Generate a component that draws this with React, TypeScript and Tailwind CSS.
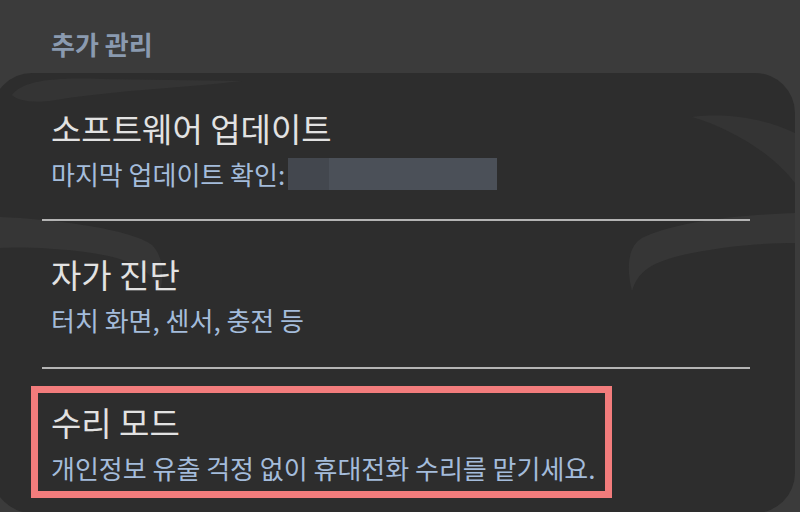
const font = { fontFamily: '"Noto Sans CJK KR", "Noto Sans", sans-serif' };

type Item = { title: string; sub: React.ReactNode };

function Swooshes() {
    return (
        <svg className="absolute inset-0 pointer-events-none" width="803" height="440" viewBox="0 0 803 440">
            <path d="M20 22 C30 8 60 4 110 6 L250 8 C200 14 120 18 70 26 C50 30 28 30 20 22 Z" fill="#343434" />
            <path d="M8 144 C60 146 140 156 160 172 C172 184 172 204 168 218 C160 198 140 186 100 180 C60 174 20 174 8 175 Z" fill="#363636" />
            <path d="M803 140 C740 142 680 150 650 165 C636 173 634 195 640 218 C646 198 660 188 700 180 C740 172 780 170 803 170 Z" fill="#363636" />
            <path d="M700 44 C730 40 770 44 803 60 L803 110 C780 80 740 56 700 44 Z" fill="#343434" />
        </svg>
    );
}

function Row({ title, sub }: Item) {
    return (
        <div className="pl-[9px]">
            <div className="text-[33px] leading-[40px] text-[#e2e2e2]">{title}</div>
            <div className="mt-[10px] text-[26px] leading-[32px] text-[#a4bcdb]">{sub}</div>
        </div>
    );
}

export default function App() {
    return (
        <div className="w-[800px] h-[512px] bg-[#3b3b3b] overflow-hidden" style={font}>
            <div className="h-[73px] pl-[51px] pt-[28px] text-[26px] leading-[32px] font-bold text-[#8a9ab0]">추가 관리</div>
            <div className="relative -ml-[8px] w-[803px] h-[440px] rounded-[40px] bg-[#2d2d2d] pl-[50px]">
                <Swooshes />
                <div className="relative w-[708px]">
                    <div className="pt-[35px] pb-[29px]">
                        <Row
                            title="소프트웨어 업데이트"
                            sub={
                                <span className="flex items-center">
                                    마지막 업데이트 확인:
                                    <span className="ml-[3px] flex h-[32px]">
                                        <span className="w-[41px] bg-[#43474e]"></span>
                                        <span className="w-[168px] bg-[#4b5058]"></span>
                                    </span>
                                </span>
                            }
                        />
                    </div>
                    <div className="h-[2px] bg-[#b4b4b4]"></div>
                    <div className="pt-[33px] pb-[31px]">
                        <Row title="자가 진단" sub="터치 화면, 센서, 충전 등" />
                    </div>
                    <div className="h-[2px] bg-[#b4b4b4]"></div>
                    <div className="relative pt-[33px]">
                        <Row title="수리 모드" sub="개인정보 유출 걱정 없이 휴대전화 수리를 맡기세요." />
                        <div className="absolute left-[-11px] top-[17px] w-[581px] h-[112px] border-[7px] border-[#f27c7c]"></div>
                    </div>
                </div>
            </div>
        </div>
    );
}
